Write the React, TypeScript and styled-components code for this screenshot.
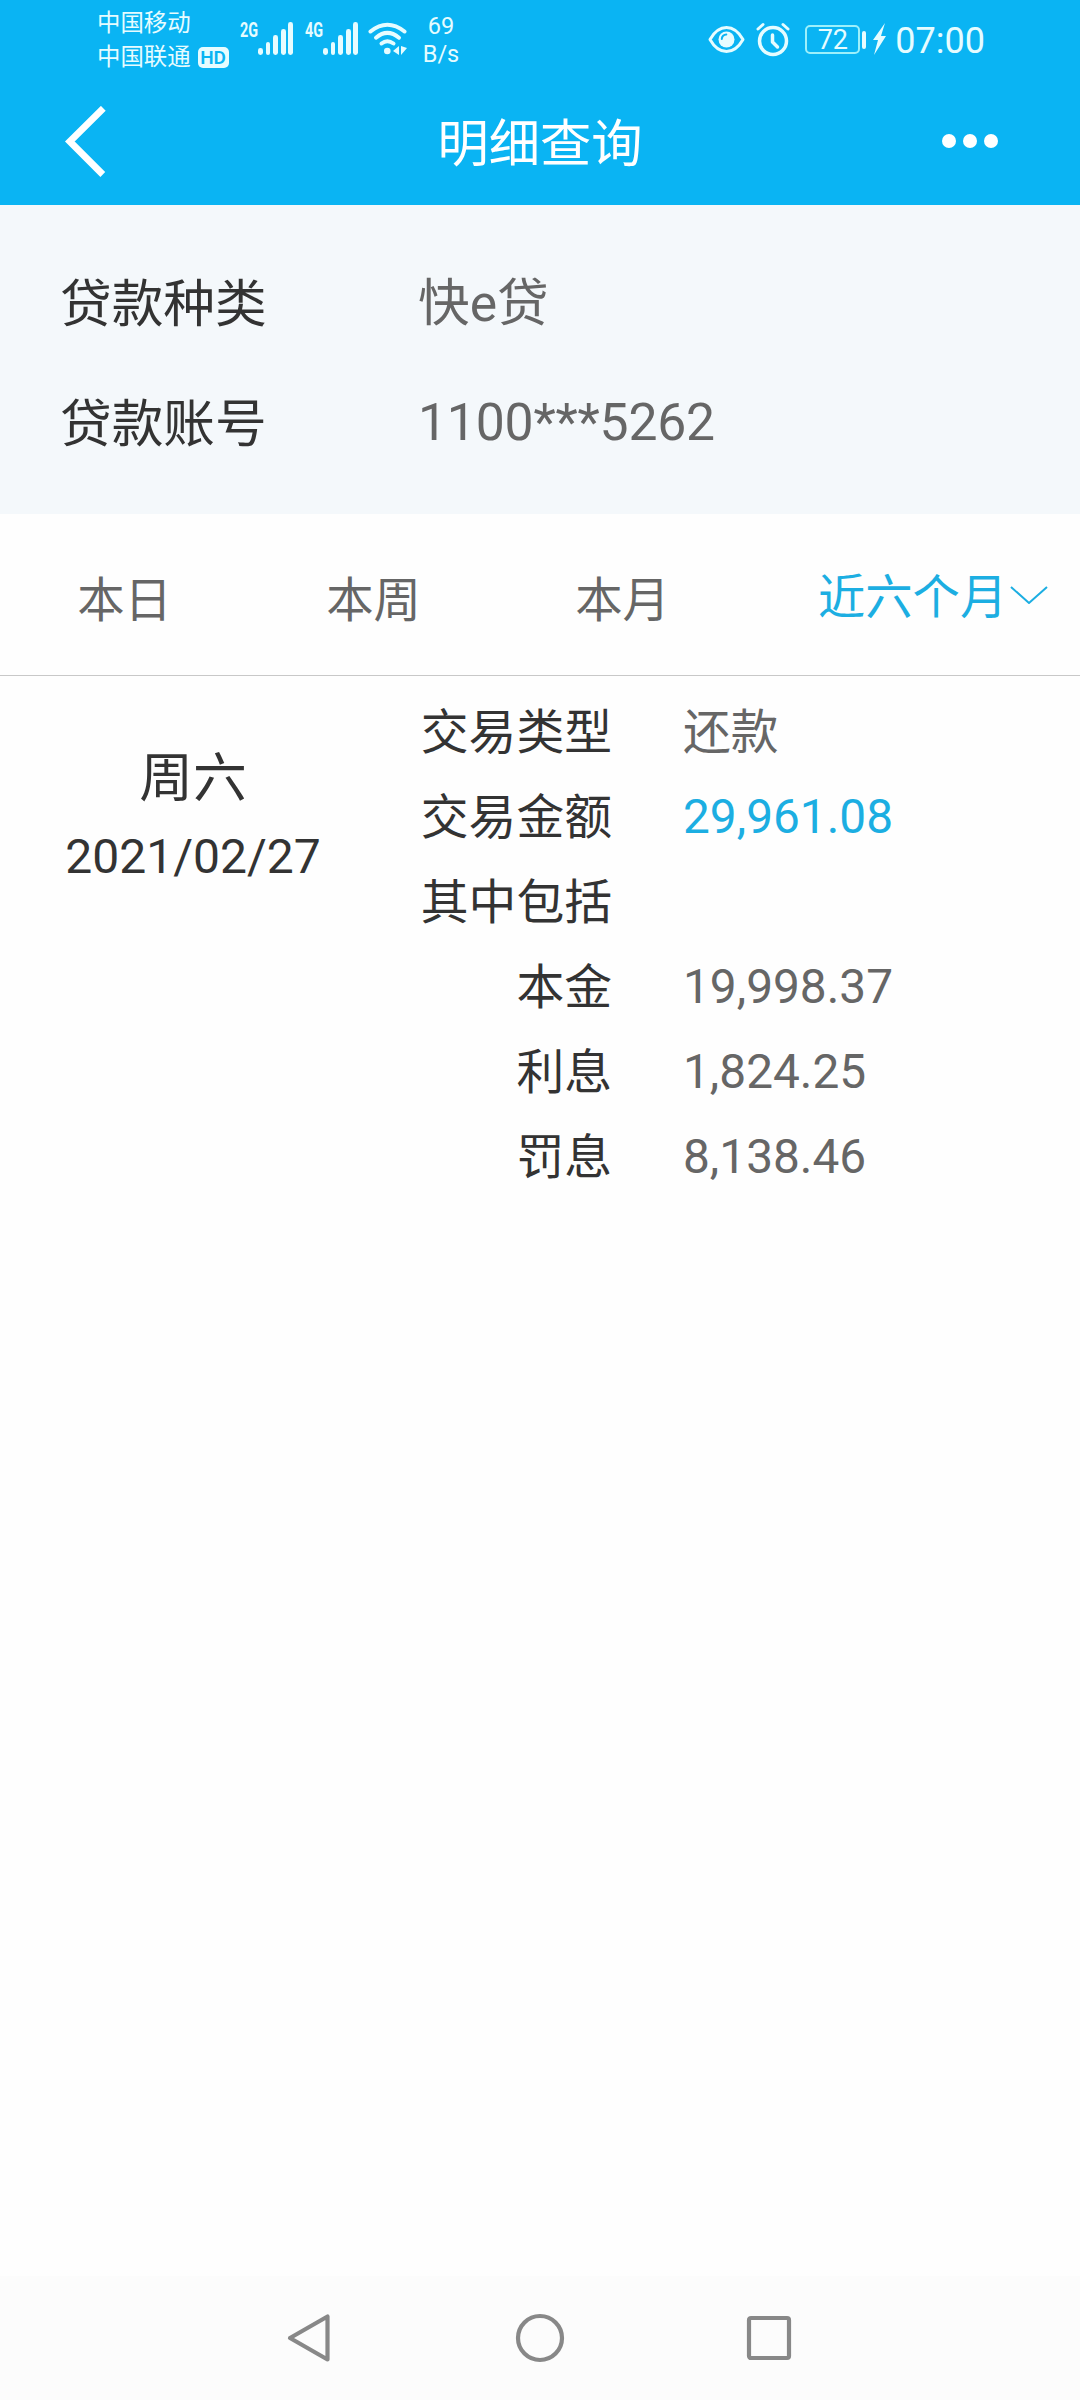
import React from 'react';
import styled, { createGlobalStyle } from 'styled-components';

const GlobalStyle = createGlobalStyle`
  * { box-sizing: border-box; }
  body {
    margin: 0;
    background: #fefefe;
    font-family: Roboto, "Noto Sans CJK SC", sans-serif;
    -webkit-font-smoothing: antialiased;
  }
`;

const Screen = styled.div`
  display: flex;
  flex-direction: column;
  width: 1080px;
  height: 2400px;
  background: #fefefe;
  overflow: hidden;
`;

const StatusBar = styled.div`
  display: flex;
  justify-content: space-between;
  align-items: flex-start;
  flex: none;
  height: 80px;
  padding: 0 95px 0 97px;
  background: #0ab4f3;
  color: #e6fcff;
`;

const StatusGroup = styled.div`
  display: flex;
  align-items: flex-start;
  height: 80px;
`;

const Carriers = styled.div`
  display: flex;
  flex-direction: column;
  width: 143px;
  padding-top: 6px;
`;

const Carrier = styled.div`
  display: flex;
  align-items: center;
  gap: 7px;
  height: 34px;
  font-size: 23.4px;
  line-height: 34px;
  white-space: nowrap;
`;

const HdBadge = styled.span`
  width: 31px;
  height: 21px;
  border-radius: 5px;
  background: #e6fcff;
  color: #0ab4f3;
  font-size: 19px;
  font-weight: 600;
  line-height: 21px;
  text-align: center;
`;

const Signal = styled.div`
  display: flex;
  align-items: flex-start;
  width: 65px;
  padding-top: 20px;
`;

const NetType = styled.span`
  width: 18px;
  font-size: 20px;
  font-weight: 700;
  line-height: 20px;
  transform: scaleX(0.72);
  transform-origin: left;
`;

const Bars = styled.div`
  display: flex;
  align-items: flex-end;
  gap: 2.8px;
  height: 35px;
`;

const Bar = styled.i<{ $h: number }>`
  width: 4.8px;
  height: ${(p) => p.$h}px;
  border-radius: 2.4px;
  background: #e6fcff;
`;

const WifiSlot = styled.div`
  width: 48px;
`;

const NetSpeed = styled.div`
  width: 46px;
  padding-top: 12px;
  font-size: 23.5px;
  line-height: 28px;
  text-align: center;
`;

const StatusIcon = styled.svg<{ $top: number; $left?: number }>`
  display: block;
  flex: none;
  margin-top: ${(p) => p.$top}px;
  margin-left: ${(p) => p.$left ?? 0}px;
`;

const Battery = styled.div`
  display: flex;
  align-items: center;
  gap: 2px;
  margin: 25px 0 0 15px;
`;

const BatteryBody = styled.div`
  width: 55px;
  height: 29px;
  border: 2px solid #9df0fb;
  border-radius: 5px;
  font-size: 27px;
  line-height: 27px;
  text-align: center;
`;

const BatteryCap = styled.i`
  width: 4px;
  height: 18px;
  border-radius: 2px;
  background: #e6fcff;
`;

const Clock = styled.span`
  margin-left: 8px;
  padding-top: 19px;
  font-size: 36px;
  line-height: 44px;
`;

const TitleBar = styled.header`
  display: grid;
  grid-template-columns: 200px 1fr 200px;
  flex: none;
  height: 125px;
  background: #0ab4f3;
  color: #fff;
`;

const BackButton = styled.button`
  display: flex;
  align-items: flex-start;
  padding: 26px 0 0 64px;
  border: 0;
  background: none;
`;

const Title = styled.h1`
  margin: 0;
  padding-top: 2px;
  font-size: 51.3px;
  font-weight: 400;
  line-height: 125px;
  text-align: center;
`;

const MoreButton = styled.button`
  display: flex;
  gap: 7px;
  padding: 54px 0 0 62px;
  border: 0;
  background: none;
`;

const Dot = styled.i`
  width: 14px;
  height: 14px;
  border-radius: 50%;
  background: #fff;
`;

const LoanPanel = styled.section`
  display: flex;
  flex-direction: column;
  flex: none;
  height: 309px;
  padding: 38px 60px 0;
  background: #f4f8fb;
`;

const LoanRow = styled.div`
  display: grid;
  grid-template-columns: 358px 1fr;
  height: 120px;
  font-size: 51.7px;
  line-height: 120px;
`;

const LoanLabel = styled.span`
  padding-top: 2px;
  color: #333;
`;

const LoanValue = styled.span<{ $numeric?: boolean }>`
  padding-top: ${(p) => (p.$numeric ? 0 : 1)}px;
  color: #666;
  letter-spacing: ${(p) => (p.$numeric ? -0.2 : 0)}px;
`;

const Tabs = styled.nav`
  display: grid;
  grid-template-columns: 249px 249px 249px 1fr;
  flex: none;
  height: 162px;
  border-bottom: 1px solid #c8c8c8;
`;

const Tab = styled.button<{ $active?: boolean }>`
  display: flex;
  align-items: center;
  justify-content: ${(p) => (p.$active ? 'flex-start' : 'center')};
  gap: 3px;
  height: ${(p) => (p.$active ? 159 : 165)}px;
  padding: 0 0 0 ${(p) => (p.$active ? 71 : 0)}px;
  border: 0;
  background: none;
  color: ${(p) => (p.$active ? '#1caee2' : '#666')};
  font: inherit;
  font-size: 47.3px;
  white-space: nowrap;
`;

const Record = styled.article`
  display: grid;
  grid-template-columns: 386px 1fr;
  flex: 1;
  align-items: start;
`;

const DateBlock = styled.div`
  display: flex;
  flex-direction: column;
  align-items: center;
  padding-top: 65px;
  color: #333;
`;

const Weekday = styled.span`
  font-size: 53.8px;
  line-height: 76px;
`;

const DateText = styled.span`
  font-size: 48px;
  line-height: 79px;
`;

const Details = styled.dl`
  display: flex;
  flex-direction: column;
  margin: 0;
  padding-top: 14px;
`;

const Detail = styled.div`
  display: grid;
  grid-template-columns: 226px 1fr;
  column-gap: 71px;
  height: 85px;
  font-size: 47.8px;
  line-height: 85px;
`;

const Term = styled.dt`
  padding-top: 1px;
  color: #333;
  text-align: right;
`;

const Amount = styled.dd<{ $accent?: boolean; $text?: boolean }>`
  margin: 0;
  padding-top: ${(p) => (p.$text ? 1 : 0)}px;
  color: ${(p) => (p.$accent ? '#1caee2' : '#666')};
`;

const SystemNav = styled.footer`
  flex: none;
  display: flex;
  justify-content: space-between;
  height: 124px;
  padding: 36px 286px 0 286px;
  background: #fcfcfc;
`;

const details = [
  { term: '交易类型', value: '还款', text: true },
  { term: '交易金额', value: '29,961.08', accent: true },
  { term: '其中包括', value: '' },
  { term: '本金', value: '19,998.37' },
  { term: '利息', value: '1,824.25' },
  { term: '罚息', value: '8,138.46' },
];

function SignalMeter({ type }: { type: string }) {
  return (
    <Signal>
      <NetType>{type}</NetType>
      <Bars>
        {[7, 13, 20, 26.5, 33].map((h) => (
          <Bar key={h} $h={h} />
        ))}
      </Bars>
    </Signal>
  );
}

export default function App() {
  return (
    <>
      <GlobalStyle />
      <Screen>
        <StatusBar>
          <StatusGroup>
            <Carriers>
              <Carrier>中国移动</Carrier>
              <Carrier>
                中国联通<HdBadge>HD</HdBadge>
              </Carrier>
            </Carriers>
            <SignalMeter type="2G" />
            <SignalMeter type="4G" />
            <WifiSlot>
              <StatusIcon $top={22} $left={-2} width="40" height="34" viewBox="0 0 40 34">
                <g fill="none" stroke="#e6fcff" strokeWidth="4" strokeLinecap="round">
                  <path d="M2.500 9.500Q19.300 -4 36.500 9.500" />
                  <path d="M8 15.700Q19.300 6 31 15.700" />
                  <path d="M13.500 21.500Q19.300 17 25.500 21.500" />
                </g>
                <circle cx="19.300" cy="29" r="3.300" fill="#e6fcff" />
                <path d="M25 29l6-5v9zM33 24v9l6-7z" fill="#e6fcff" />
              </StatusIcon>
            </WifiSlot>
            <NetSpeed>
              69
              <br />
              B/s
            </NetSpeed>
          </StatusGroup>
          <StatusGroup>
            <StatusIcon $top={25} width="37" height="29" viewBox="0 0 37 29">
              <path
                d="M2 14.500C11 -1.500 26 -1.500 35 14.500C26 30.500 11 30.500 2 14.500z"
                fill="none"
                stroke="#e6fcff"
                strokeWidth="3"
                strokeLinejoin="round"
              />
              <circle cx="18.500" cy="14.500" r="8" fill="#e6fcff" />
              <path d="M13.800 14a4.500 4.500 0 0 1 4.500-4.500" fill="none" stroke="#0ab4f3" strokeWidth="2" strokeLinecap="round" />
            </StatusIcon>
            <StatusIcon $top={22} $left={11} width="34" height="35" viewBox="0 0 34 35">
              <g fill="none" stroke="#e6fcff" strokeLinecap="round" strokeLinejoin="round">
                <circle cx="17" cy="19" r="13.500" strokeWidth="3.500" />
                <path d="M16.500 13v7l5 5" strokeWidth="3.500" />
                <path d="M2 7l5-4.500M27 2.500L32 7" strokeWidth="3" />
              </g>
            </StatusIcon>
            <Battery>
              <BatteryBody>72</BatteryBody>
              <BatteryCap />
            </Battery>
            <StatusIcon $top={23} $left={7} width="14" height="32" viewBox="0 0 14 32">
              <path d="M12 0L0 17h5L1 32l12-19H8z" fill="#e6fcff" />
            </StatusIcon>
            <Clock>07:00</Clock>
          </StatusGroup>
        </StatusBar>
        <TitleBar>
          <BackButton aria-label="返回">
            <svg width="44" height="72" viewBox="0 0 44 72">
              <path d="M39.300 2.300L5.800 35.500L38.800 68.500" fill="none" stroke="#fff" strokeWidth="6.800" />
            </svg>
          </BackButton>
          <Title>明细查询</Title>
          <MoreButton aria-label="更多">
            <Dot />
            <Dot />
            <Dot />
          </MoreButton>
        </TitleBar>
        <LoanPanel>
          <LoanRow>
            <LoanLabel>贷款种类</LoanLabel>
            <LoanValue>快e贷</LoanValue>
          </LoanRow>
          <LoanRow>
            <LoanLabel>贷款账号</LoanLabel>
            <LoanValue $numeric>1100***5262</LoanValue>
          </LoanRow>
        </LoanPanel>
        <Tabs>
          <Tab>本日</Tab>
          <Tab>本周</Tab>
          <Tab>本月</Tab>
          <Tab $active>
            近六个月
            <svg width="38" height="20" viewBox="0 0 38 20">
              <path d="M1 3l18 16L37 3" fill="none" stroke="#1caee2" strokeWidth="2" />
            </svg>
          </Tab>
        </Tabs>
        <Record>
          <DateBlock>
            <Weekday>周六</Weekday>
            <DateText>2021/02/27</DateText>
          </DateBlock>
          <Details>
            {details.map((d) => (
              <Detail key={d.term}>
                <Term>{d.term}</Term>
                <Amount $accent={d.accent} $text={d.text}>
                  {d.value}
                </Amount>
              </Detail>
            ))}
          </Details>
        </Record>
        <SystemNav>
          <svg width="48" height="52" viewBox="0 0 48 52" fill="none" stroke="#888" strokeWidth="4.200" strokeLinejoin="round">
            <path d="M41.500 4.500v43L4 26z" />
          </svg>
          <svg width="52" height="52" viewBox="0 0 52 52" fill="none" stroke="#888" strokeWidth="4.200">
            <circle cx="26" cy="26" r="22" />
          </svg>
          <svg width="48" height="52" viewBox="0 0 48 52" fill="none" stroke="#888" strokeWidth="4.200">
            <rect x="3" y="6" width="40" height="40" rx="2" />
          </svg>
        </SystemNav>
      </Screen>
    </>
  );
}
